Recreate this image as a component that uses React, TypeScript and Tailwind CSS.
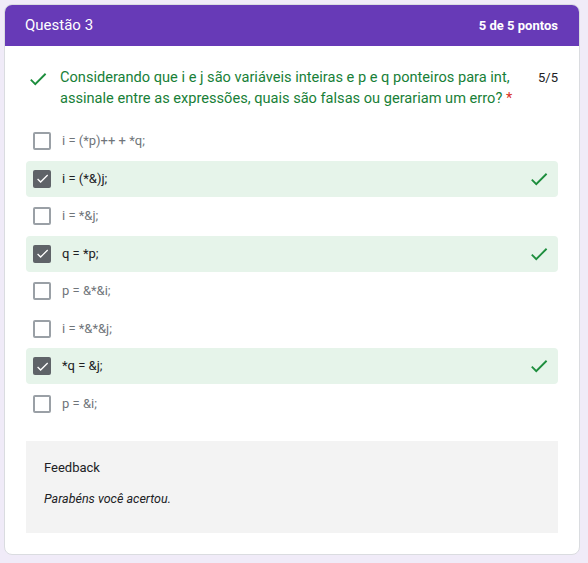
const opcoes = [
  { texto: 'i = (*p)++ + *q;', marcada: false },
  { texto: 'i = (*&)j;', marcada: true },
  { texto: 'i = *&j;', marcada: false },
  { texto: 'q = *p;', marcada: true },
  { texto: 'p = &*&i;', marcada: false },
  { texto: 'i = *&*&j;', marcada: false },
  { texto: '*q = &j;', marcada: true },
  { texto: 'p = &i;', marcada: false },
];

function Check({ className }: { className?: string }) {
  return (
    <svg viewBox="0 0 24 24" className={className} fill="currentColor">
      <path d="M9 16.17 4.83 12l-1.42 1.41L9 19 21 7l-1.41-1.41z" />
    </svg>
  );
}

export default function App() {
  return (
    <div
      className="min-h-[563px] w-[588px] bg-[#f0ebf8] pt-[4px] pl-[4px]"
      style={{ fontFamily: 'Roboto, "Liberation Sans", sans-serif' }}
    >
      <div className="w-[576px] overflow-hidden rounded-lg border border-[#dadce0] bg-white">
        <div className="flex h-[41px] items-center justify-between bg-[#673ab7] pl-[20px] pr-[21px] text-white">
          <span className="text-[15px]">Questão 3</span>
          <span className="text-[13px] font-bold">5 de 5 pontos</span>
        </div>

        <div className="px-[21px] pt-[21px] pb-[21px]">
          <div className="flex items-start">
            <Check className="mt-[1px] ml-[1px] h-[22px] w-[22px] shrink-0 text-[#1e8e3e]" />
            <p className="ml-[11px] flex-1 text-[14.6px] leading-[21px] text-[#188038]">
              Considerando que i e j são variáveis inteiras e p e q ponteiros para int, assinale entre as
              expressões, quais são falsas ou gerariam um erro? <span className="text-[#d93025]">*</span>
            </p>
            <span className="ml-[16px] text-[13px] leading-[21px] text-[#202124]">5/5</span>
          </div>

          <div className="mt-[14px] flex flex-col gap-[1.5px]">
            {opcoes.map((o) => (
              <div
                key={o.texto}
                className={
                  'flex h-[36px] items-center rounded pl-[7px] pr-[8px] ' + (o.marcada ? 'bg-[#e6f4ea]' : '')
                }
              >
                {o.marcada ? (
                  <div className="flex h-[18px] w-[18px] items-center justify-center rounded-[2px] bg-[#5f6368]">
                    <Check className="h-[15px] w-[15px] text-white" />
                  </div>
                ) : (
                  <div className="h-[18px] w-[18px] rounded-[2px] border-2 border-[#9aa0a6]" />
                )}
                <span
                  className={
                    'ml-[11px] flex-1 text-[13px] ' + (o.marcada ? 'text-[#202124]' : 'text-[#70757a]')
                  }
                >
                  {o.texto}
                </span>
                {o.marcada && <Check className="h-[22px] w-[22px] text-[#1e8e3e]" />}
              </div>
            ))}
          </div>

          <div className="mt-[19px] h-[92px] bg-[#f3f3f3] px-[18px] pt-[18px]">
            <p className="text-[13px] leading-[18px] text-[#202124]">Feedback</p>
            <p className="mt-[13px] text-[12.5px] italic leading-[18px] text-[#202124]">Parabéns você acertou.</p>
          </div>
        </div>
      </div>
    </div>
  );
}
